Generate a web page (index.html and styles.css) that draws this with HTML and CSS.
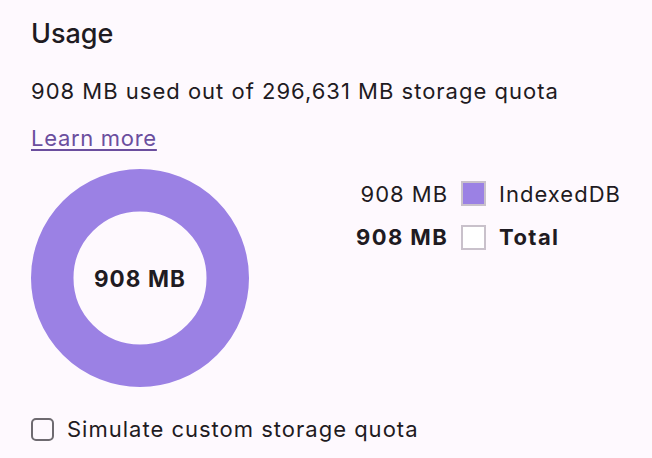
FILE: index.html
```html
<!DOCTYPE html>
<html lang="en">
<head>
<meta charset="utf-8">
<title>Usage</title>
<link rel="stylesheet" href="styles.css">
</head>
<body>
<section class="panel">
  <h2 class="title">Usage</h2>
  <p class="summary">908 MB used out of 296,631 MB storage quota</p>
  <a class="learn" href="#">Learn more</a>
  <div class="chart-row">
    <div class="donut">
      <svg class="donut-svg" width="218" height="218" viewBox="0 0 218 218">
        <circle cx="109" cy="109" r="87.75" fill="none" stroke="#9b81e4" stroke-width="42.5"/>
      </svg>
      <span class="donut-label">908 MB</span>
    </div>
    <div class="legend">
      <span class="amount">908 MB</span>
      <span class="swatch swatch-idb"></span>
      <span class="name">IndexedDB</span>
      <span class="amount strong">908 MB</span>
      <span class="swatch"></span>
      <span class="name strong">Total</span>
    </div>
  </div>
  <label class="quota">
    <span class="checkbox"></span>
    <span class="quota-text">Simulate custom storage quota</span>
  </label>
</section>
</body>
</html>
```

FILE: styles.css
```css
html, body {
  margin: 0;
  padding: 0;
  background: #fef9fe;
}
body {
  font-family: Inter, "Noto Sans", "DejaVu Sans", sans-serif;
  color: #1f1b22;
  width: 652px;
  height: 458px;
  overflow: hidden;
  letter-spacing: 1px;
}
.panel {
  display: flex;
  flex-direction: column;
  align-items: flex-start;
  padding: 18px 31px 0 31px;
}
.title {
  margin: 0;
  font-size: 27px;
  line-height: 32px;
  font-weight: 500;
  letter-spacing: 0;
}
.summary {
  margin: 26px 0 0 0;
  font-size: 22px;
  line-height: 30px;
  white-space: nowrap;
}
.learn {
  margin-top: 17px;
  font-size: 22px;
  line-height: 30px;
  letter-spacing: 0.7px;
  color: #6b4e9e;
  text-decoration: underline;
  text-underline-offset: 3px;
  text-decoration-thickness: 2px;
}
.chart-row {
  display: flex;
  align-items: flex-start;
  margin-top: 16px;
  gap: 107px;
}
.donut {
  display: grid;
  flex: none;
  width: 218px;
  height: 218px;
  place-items: center;
}
.donut-svg, .donut-label {
  grid-area: 1 / 1;
}
.donut-label {
  font-size: 22.5px;
  font-weight: 700;
  letter-spacing: 1.1px;
  white-space: nowrap;
}
.legend {
  display: grid;
  grid-template-columns: max-content 25px max-content;
  grid-auto-rows: 43.5px;
  align-items: center;
  column-gap: 13px;
  margin-top: 3px;
  font-size: 22px;
  white-space: nowrap;
}
.amount {
  justify-self: end;
}
.strong {
  font-weight: 700;
  letter-spacing: 1.4px;
}
.swatch {
  box-sizing: border-box;
  width: 25px;
  height: 25px;
  border: 2px solid #c9c1cb;
  background: #ffffff;
}
.swatch-idb {
  background: #9b81e4;
}
.quota {
  display: flex;
  align-items: center;
  gap: 13px;
  margin-top: 27px;
  font-size: 22px;
  line-height: 30px;
  white-space: nowrap;
}
.checkbox {
  box-sizing: border-box;
  flex: none;
  width: 23px;
  height: 23px;
  border: 2px solid #6e6a70;
  border-radius: 5px;
}
```
